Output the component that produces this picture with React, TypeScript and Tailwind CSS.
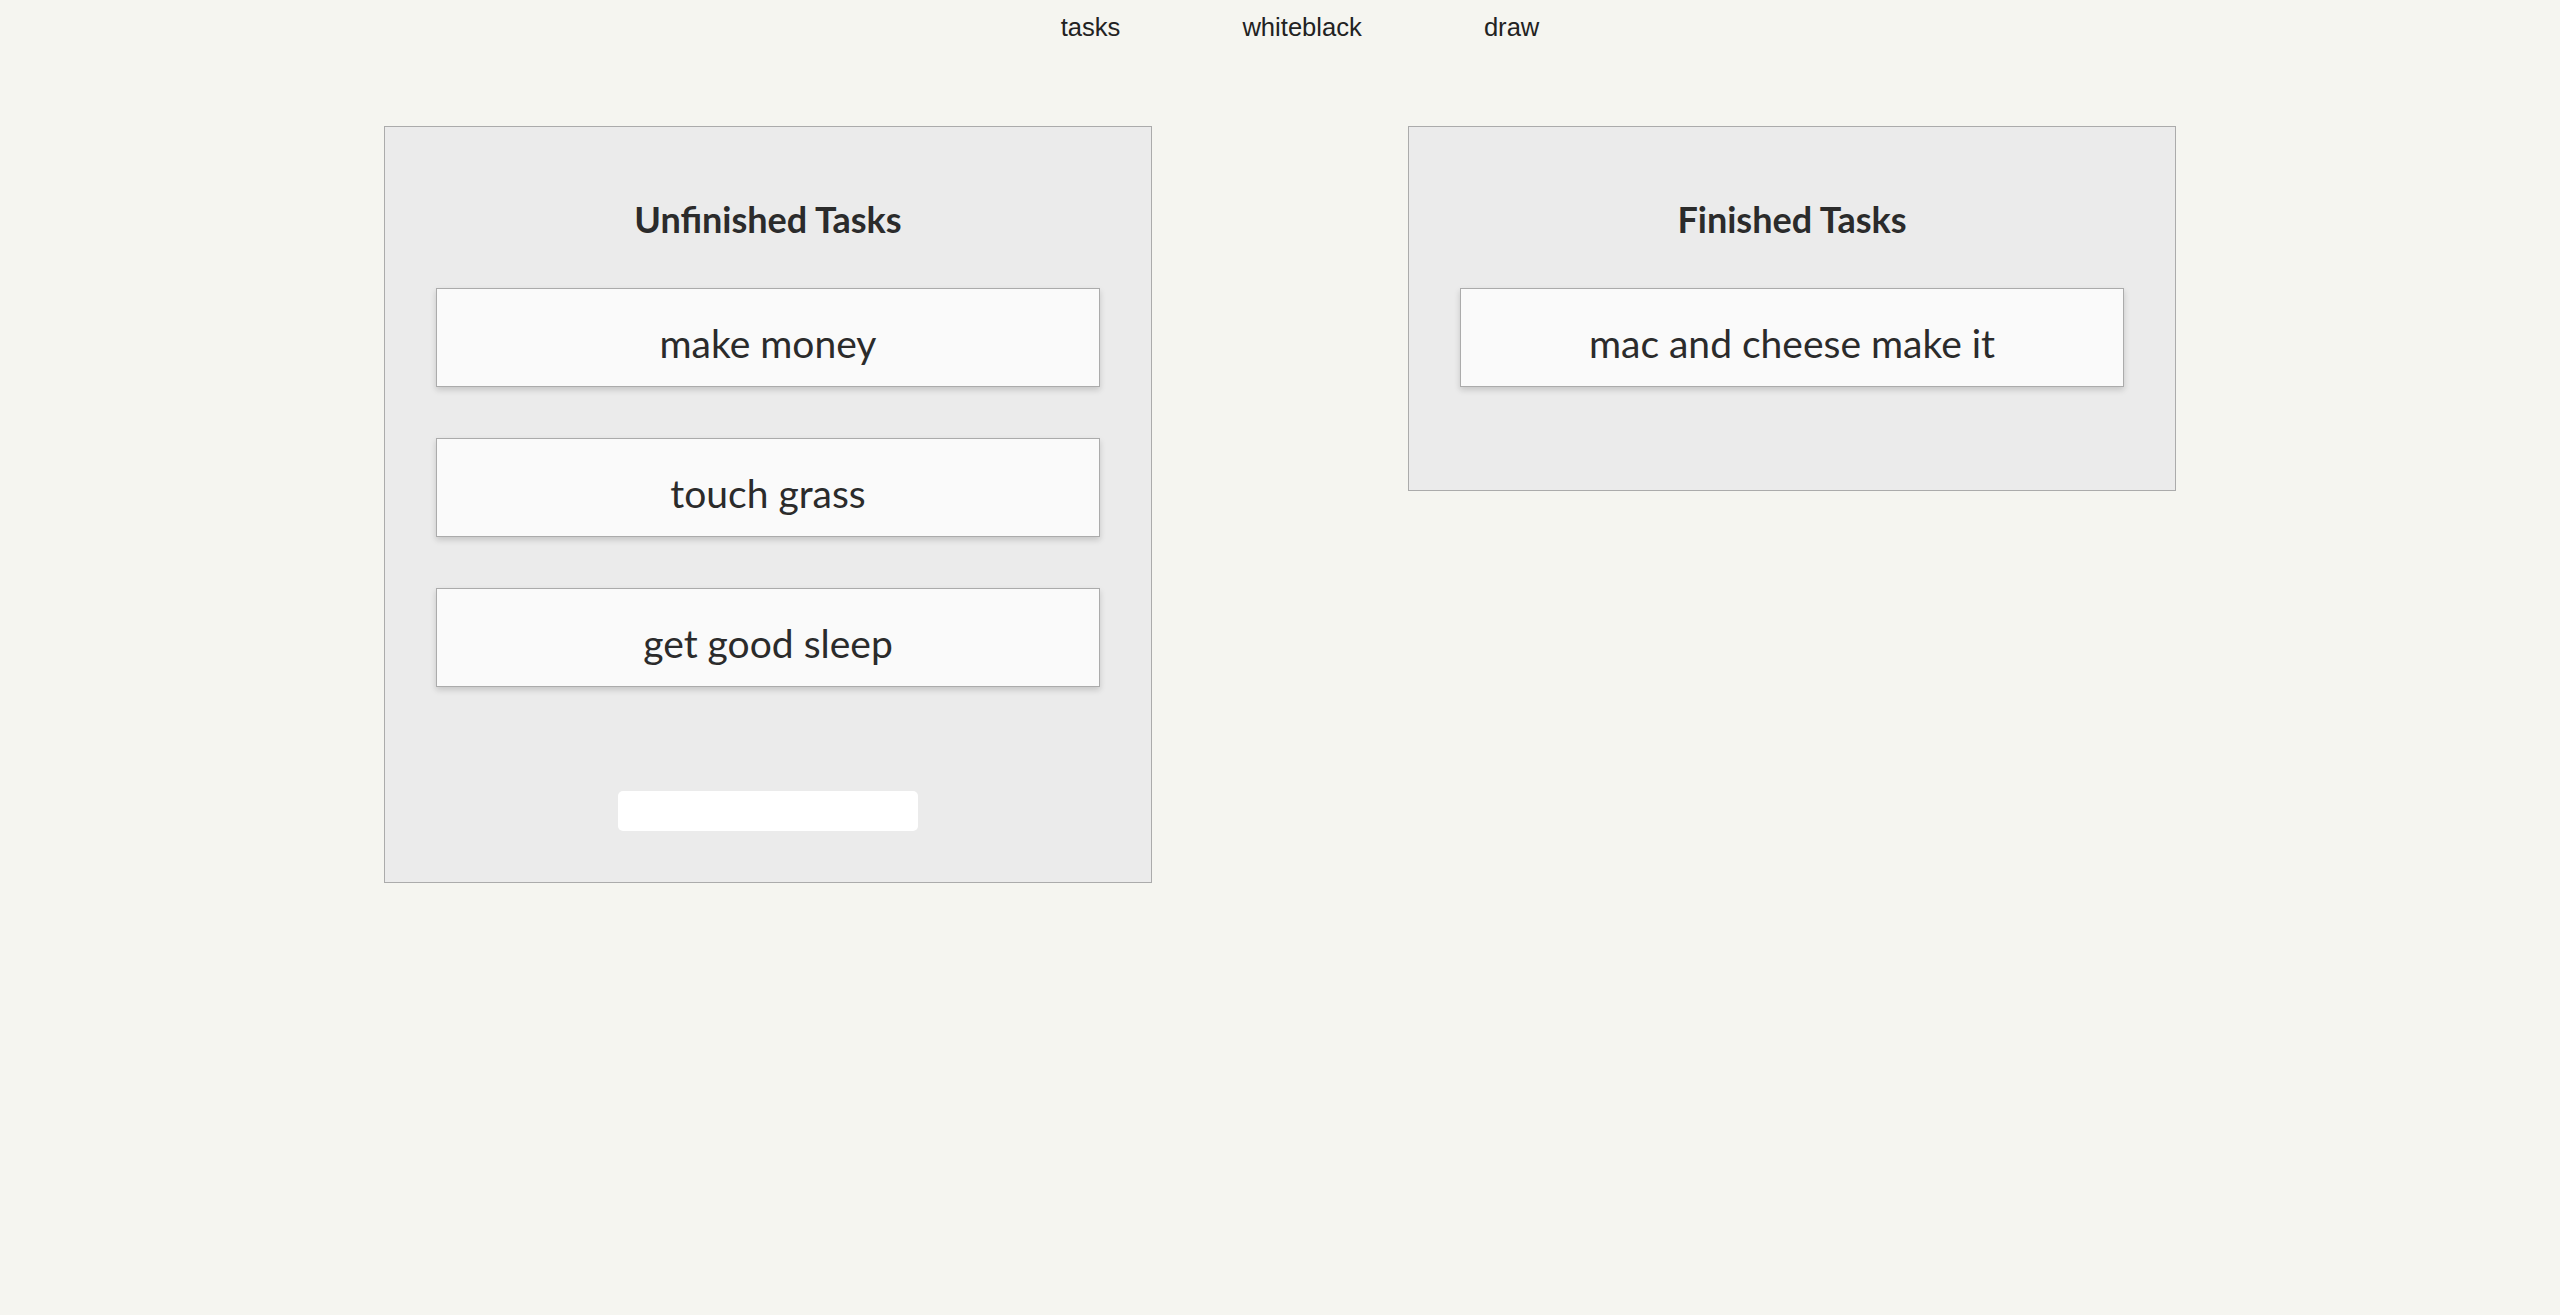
const unfinished = ["make money", "touch grass", "get good sleep"];
const finished = ["mac and cheese make it"];

function TaskCard({ text }: { text: string }) {
  return (
    <div className="h-[99px] border border-[#ababab] bg-[#fafafa] shadow-[0_3px_6px_rgba(0,0,0,0.16)] pt-[31px] text-center text-[39px] leading-[46px] text-[#2b2b2b]">
      {text}
    </div>
  );
}

function Panel({ title, tasks, withInput }: { title: string; tasks: string[]; withInput?: boolean }) {
  return (
    <div className="w-[768px] border border-[#ababab] bg-[#ebebeb] p-[51px]">
      <h2 className="text-center text-[36px] font-bold leading-[82px] mb-[28px] text-[#2b2b2b]">{title}</h2>
      <div className="flex flex-col gap-[51px]">
        {tasks.map((t) => (
          <TaskCard key={t} text={t} />
        ))}
      </div>
      {withInput ? (
        <div className="flex justify-center mt-[104px]">
          <input className="w-[300px] h-[40px] rounded-[5px] bg-white outline-none" />
        </div>
      ) : (
        <div className="h-[52px]" />
      )}
    </div>
  );
}

export default function App() {
  return (
    <div className="min-h-screen bg-[#f5f5f0] font-['Lato',sans-serif]">
      <nav className="flex justify-center gap-[122px] pl-[40px] pt-[8px] font-['Liberation_Sans',Arial,sans-serif] text-[25.6px] leading-[38.4px] text-[#222]">
        <a>tasks</a>
        <a>whiteblack</a>
        <a>draw</a>
      </nav>
      <div className="flex items-start gap-[256px] pl-[384px] mt-[79.6px]">
        <Panel title="Unfinished Tasks" tasks={unfinished} withInput />
        <Panel title="Finished Tasks" tasks={finished} />
      </div>
    </div>
  );
}
